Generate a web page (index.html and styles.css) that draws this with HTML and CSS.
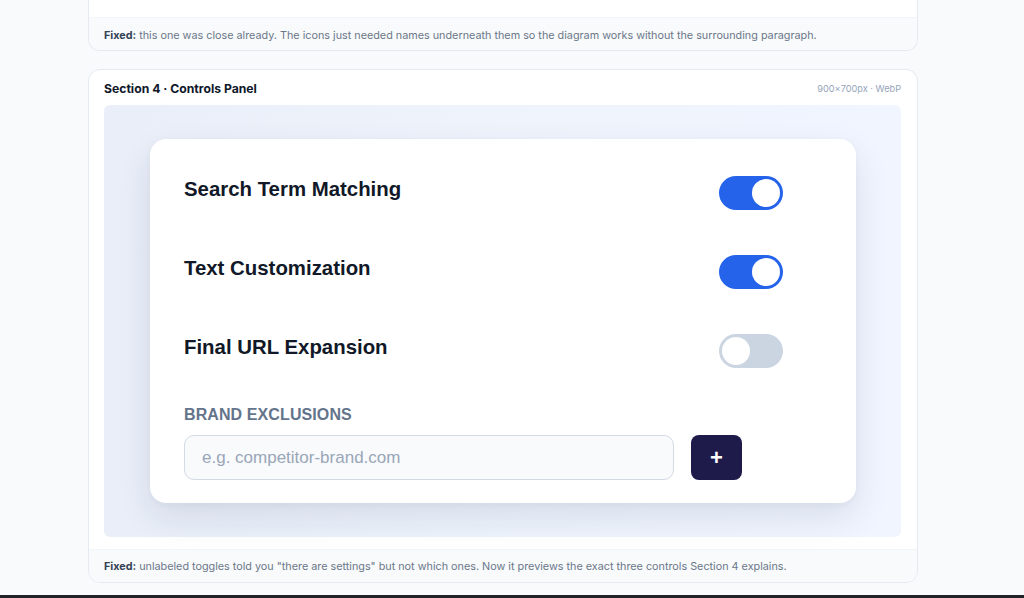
FILE: index.html
```html
<!DOCTYPE html>
<html lang="en">
<head>
<meta charset="utf-8">
<title>Controls Panel</title>
<link rel="stylesheet" href="styles.css">
</head>
<body>
<div class="page">
  <div class="card card-cut">
    <div class="card-body-cut"></div>
    <div class="card-foot foot-cut"><b>Fixed:</b> this one was close already. The icons just needed names underneath them so the diagram works without the surrounding paragraph.</div>
  </div>

  <div class="card">
    <div class="card-head">
      <span class="card-title">Section 4 · Controls Panel</span>
      <span class="card-meta">900×700px · WebP</span>
    </div>
    <div class="preview">
      <div class="panel">
        <div class="row">
          <span class="row-label">Search Term Matching</span>
          <span class="toggle on"><span class="knob"></span></span>
        </div>
        <div class="row">
          <span class="row-label">Text Customization</span>
          <span class="toggle on"><span class="knob"></span></span>
        </div>
        <div class="row">
          <span class="row-label">Final URL Expansion</span>
          <span class="toggle off"><span class="knob"></span></span>
        </div>
        <div class="field-label">BRAND EXCLUSIONS</div>
        <div class="field-row">
          <div class="input">e.g. competitor-brand.com</div>
          <div class="add-btn">+</div>
        </div>
      </div>
    </div>
    <div class="card-foot"><b>Fixed:</b> unlabeled toggles told you "there are settings" but not which ones. Now it previews the exact three controls Section 4 explains.</div>
  </div>
</div>
<div class="dock"></div>
</body>
</html>
```

FILE: styles.css
```css
* { box-sizing: border-box; }
html, body { margin: 0; padding: 0; }
body {
  background: #f8fafc;
  font-family: Inter, "Noto Sans", sans-serif;
  width: 1024px;
  height: 598px;
  overflow: hidden;
  display: flex;
  flex-direction: column;
}
.page {
  flex: 1;
  padding-left: 88px;
  display: flex;
  flex-direction: column;
  gap: 18px;
}
.card {
  width: 830px;
  background: #ffffff;
  border: 1px solid #e5e9f0;
  border-radius: 12px;
  overflow: hidden;
}
.card-cut {
  border-top: none;
  border-radius: 0 0 12px 12px;
}
.card-body-cut { height: 17px; }
.card-foot {
  background: #f8fafc;
  border-top: 1px solid #f1f4f8;
  height: 33px;
  padding: 0 15px;
  display: flex;
  align-items: center;
  font-size: 10.8px;
  color: #6b7789;
  white-space: nowrap;
}
.foot-cut { padding-top: 3px; }
.card-foot b {
  color: #334155;
  font-weight: 700;
  margin-right: 3px;
}
.card-head {
  height: 35px;
  padding: 2px 16px 0 15px;
  display: flex;
  align-items: center;
  justify-content: space-between;
}
.card-title {
  font-size: 12.2px;
  font-weight: 700;
  color: #0f172a;
}
.card-meta {
  font-size: 9.2px;
  color: #94a3b8;
}
.preview {
  margin: 0 16px 12px 15px;
  height: 432px;
  background: linear-gradient(90deg, #e9eef8 0%, #eef3fc 50%, #f1f5ff 100%);
  border-radius: 6px;
  padding: 34px 45px 34px 46px;
}
.panel {
  height: 364px;
  background: #ffffff;
  border-radius: 16px;
  box-shadow: 0 14px 34px rgba(30, 41, 82, 0.11), 0 2px 6px rgba(30, 41, 82, 0.04);
  padding: 37px 73px 0 34px;
  font-family: "Liberation Sans", Arial, sans-serif;
  display: flex;
  flex-direction: column;
}
.row {
  height: 34px;
  margin-bottom: 45px;
  display: flex;
  align-items: center;
  justify-content: space-between;
}
.row-label {
  font-size: 20.4px;
  font-weight: 700;
  color: #111827;
  position: relative;
  top: -4px;
}
.toggle {
  width: 64px;
  height: 34px;
  border-radius: 17px;
  padding: 3px;
  display: flex;
}
.toggle.on { background: #2563eb; justify-content: flex-end; }
.toggle.off { background: #cbd5e1; justify-content: flex-start; }
.knob {
  width: 28px;
  height: 28px;
  border-radius: 50%;
  background: #ffffff;
}
.field-label {
  margin-top: -7px;
  font-size: 16px;
  font-weight: 700;
  color: #64748b;
  line-height: 18px;
  letter-spacing: 0.1px;
}
.field-row {
  margin-top: 11px;
  display: flex;
  gap: 17px;
}
.input {
  width: 490px;
  height: 45px;
  border: 1px solid #d3dae4;
  border-radius: 10px;
  background: #f8fafc;
  padding-left: 17px;
  display: flex;
  align-items: center;
  font-size: 17px;
  color: #9aa6b8;
}
.add-btn {
  width: 51px;
  height: 45px;
  border-radius: 8px;
  background: #1e1b4b;
  color: #ffffff;
  font-size: 22px;
  font-weight: 700;
  display: flex;
  align-items: center;
  justify-content: center;
}
.dock {
  height: 3px;
  background: #1f2328;
  flex: none;
}
```
